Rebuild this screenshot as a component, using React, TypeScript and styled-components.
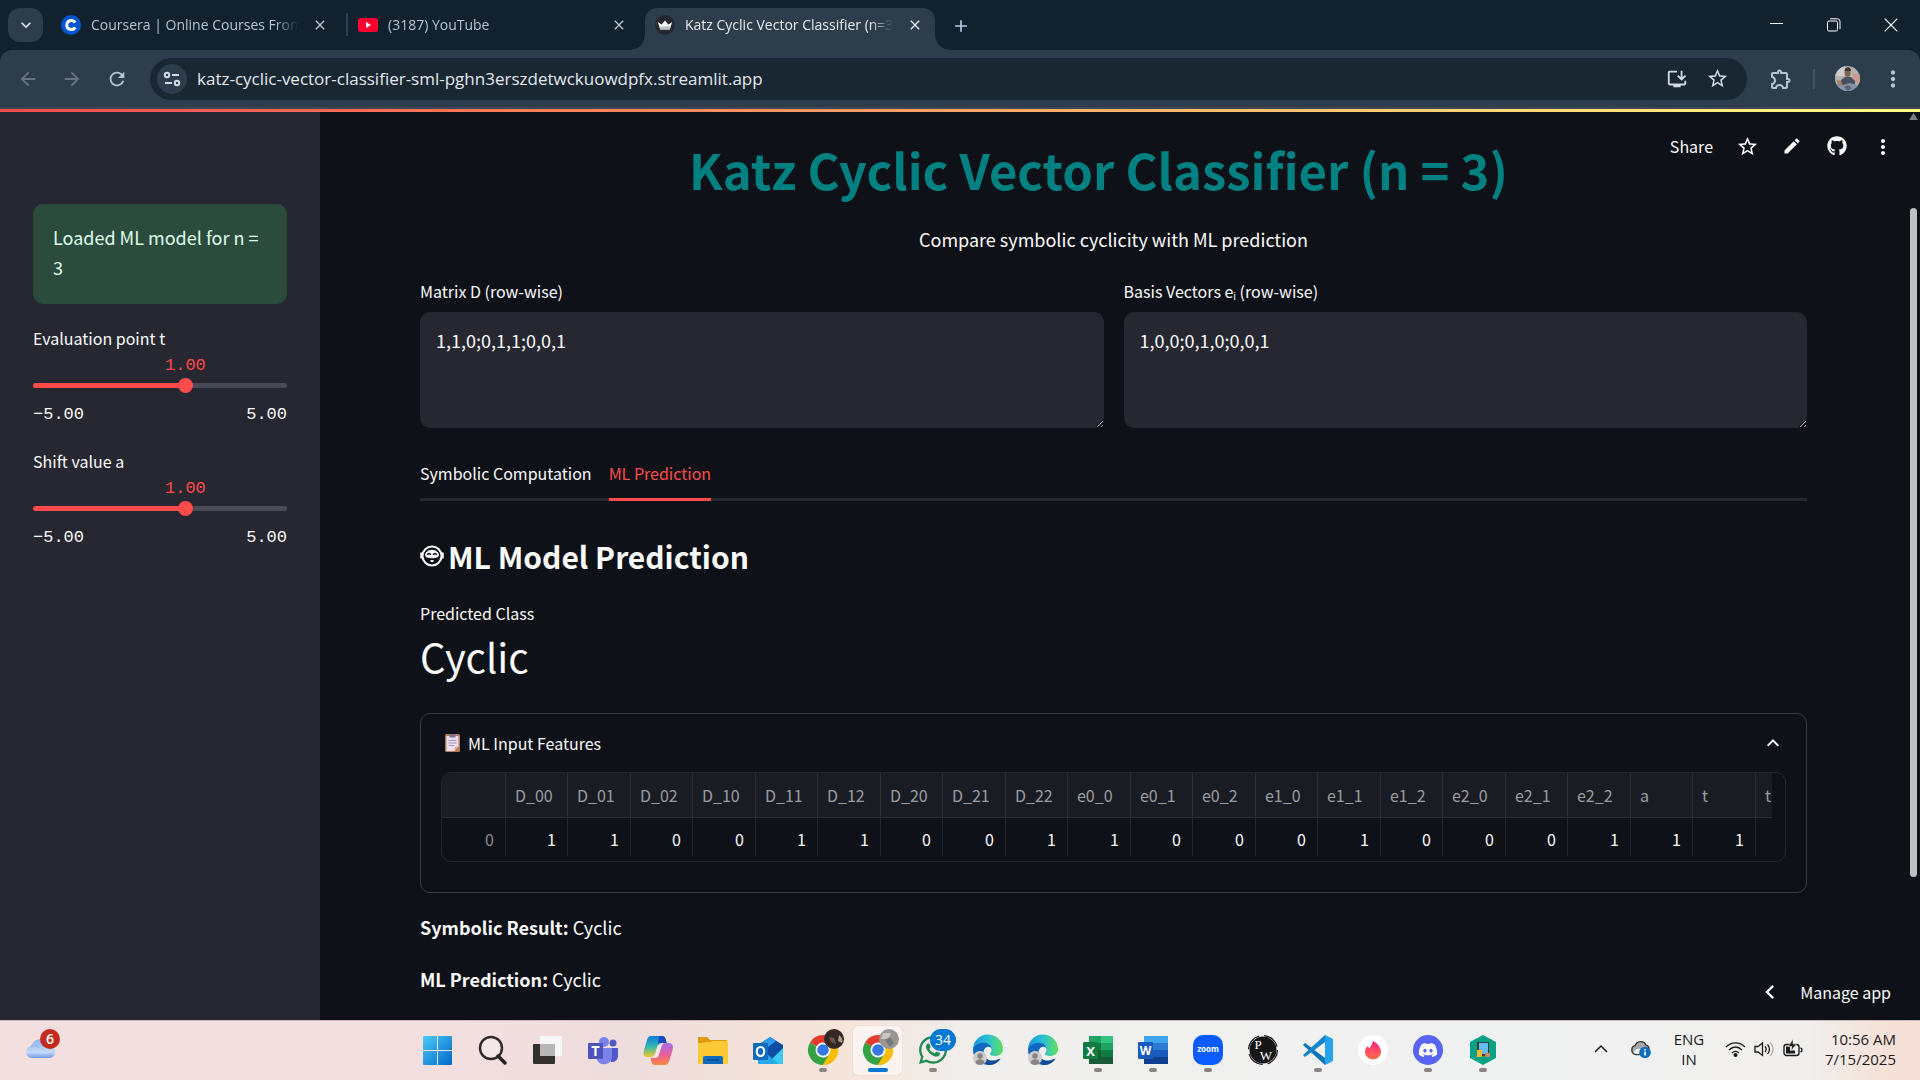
import React, { useState } from 'react';
import styled, { createGlobalStyle, css } from 'styled-components';
import {
  MdOutlineInstallDesktop,
  MdStarBorder,
  MdOutlineExtension,
  MdMoreVert,
  MdEdit,
  MdArrowBack,
  MdArrowForward,
  MdRefresh,
  MdClose,
  MdAdd,
  MdKeyboardArrowDown,
  MdKeyboardArrowUp,
  MdKeyboardArrowLeft,
} from 'react-icons/md';
import { FaGithub, FaDiscord, FaWhatsapp } from 'react-icons/fa';

const appFont = `'Noto Sans CJK SC', 'Noto Sans', sans-serif`;
const systemFont = `'Open Sans', 'Noto Sans', sans-serif`;
const monoFont = `'Liberation Mono', monospace`;

const GlobalStyle = createGlobalStyle`
  *, *::before, *::after { box-sizing: border-box; }
  body { margin: 0; background: #0e1117; }
  button, textarea, input { font: inherit; color: inherit; }
  button { background: none; border: 0; padding: 0; cursor: pointer; }
  svg { display: block; flex: none; }
`;

const Screen = styled.div`
  display: flex;
  flex-direction: column;
  height: 100vh;
  overflow: hidden;
  color: #fafafa;
  font-family: ${appFont};
`;

/* ---------- browser chrome ---------- */

const TabStrip = styled.header`
  display: flex;
  align-items: flex-end;
  height: 50px;
  padding-left: 8px;
  background: #12212e;
  font-family: ${systemFont};
  font-size: 14px;
`;

const TabSearch = styled.button`
  display: grid;
  place-items: center;
  width: 35px;
  height: 34px;
  margin: 0 8px 8px 0;
  border-radius: 12px;
  background: #2e3d4b;
  color: #e3e8ee;
`;

const BrowserTab = styled.div<{ $active?: boolean; $divider?: boolean }>`
  position: relative;
  display: flex;
  align-items: center;
  gap: 10px;
  width: ${(p) => (p.$active ? 290 : 297)}px;
  height: 42px;
  padding: 0 ${(p) => (p.$active ? 10 : 16)}px 8px 10px;
  color: ${(p) => (p.$active ? '#e6ebf0' : '#b6c3d1')};
  ${(p) =>
    p.$divider &&
    css`
      border-right: 2px solid transparent;
      border-image: linear-gradient(transparent 14%, #2e3d4b 14%, #2e3d4b 66%, transparent 66%) 1;
    `}
  ${(p) =>
    p.$active &&
    css`
      border-radius: 12px 12px 0 0;
      background: #2e3d4b;
      &::before,
      &::after {
        content: '';
        position: absolute;
        bottom: 0;
        width: 14px;
        height: 14px;
      }
      &::before {
        left: -14px;
        background: radial-gradient(circle at 0 0, transparent 13px, #2e3d4b 14px);
      }
      &::after {
        right: -14px;
        background: radial-gradient(circle at 100% 0, transparent 13px, #2e3d4b 14px);
      }
    `}
`;

const TabTitle = styled.span`
  flex: 1;
  overflow: hidden;
  white-space: nowrap;
  line-height: 24px;
  mask-image: linear-gradient(to right, #000 88%, transparent 99%);
`;

const IconButton = styled.button<{ $w?: number; $h?: number }>`
  display: grid;
  place-items: center;
  width: ${(p) => p.$w ?? 20}px;
  height: ${(p) => p.$h ?? 20}px;
`;

const NewTab = styled(IconButton)`
  margin: 0 0 14px 16px;
  color: #b6c9de;
`;

const WindowControls = styled.div`
  display: flex;
  align-self: stretch;
  margin-left: auto;
  color: #fff;
`;

const AddressRow = styled.div`
  background: #12212e;
`;

const Toolbar = styled.div`
  display: flex;
  align-items: center;
  height: 59px;
  padding: 0 5px 0 6px;
  border-radius: 12px 12px 0 0;
  border-bottom: 2px solid #404753;
  background: #2e3d4b;
  color: #b6c3d1;
`;

const NavButton = styled(IconButton)<{ $dim?: boolean }>`
  color: ${(p) => (p.$dim ? '#697581' : '#b6c3d1')};
`;

const AddressBar = styled.div`
  display: flex;
  flex: 1;
  align-items: center;
  height: 42px;
  margin: 0 11px 0 10px;
  padding: 0 10px 0 7px;
  border-radius: 21px;
  background: #192733;
  color: #d3dae2;
`;

const SiteInfo = styled.button`
  display: grid;
  place-items: center;
  width: 30px;
  height: 30px;
  border-radius: 50%;
  background: #2e3d4b;
`;

const AddressInput = styled.input`
  flex: 1;
  min-width: 0;
  margin: 0 10px;
  padding: 0;
  border: 0;
  outline: 0;
  background: transparent;
  color: #e3e8ee;
  font-family: ${systemFont};
  font-size: 17px;
  line-height: 24px;
`;

const ToolbarDivider = styled.span`
  width: 2px;
  height: 20px;
  margin: 0 10px;
  background: #465563;
`;

/* ---------- page ---------- */

const Decoration = styled.div`
  flex: none;
  height: 3px;
  background: linear-gradient(90deg, #ff4b4b, #fffd80);
`;

const Page = styled.div`
  position: relative;
  display: grid;
  grid-template-columns: 320px 1fr 13px;
  flex: 1;
  min-height: 0;
  overflow: hidden;
  background: #0e1117;
`;

const Sidebar = styled.aside`
  padding: 92px 33px 0;
  background: #262730;
`;

const Alert = styled.div`
  margin-bottom: 21px;
  padding: 18px 20px 22px;
  border-radius: 10px;
  background: #2b4b3c;
  color: #dffde9;
  font-size: 18px;
  line-height: 30px;
`;

const SliderField = styled.div`
  display: flex;
  flex-direction: column;
  margin-bottom: 20px;
`;

const FieldLabel = styled.label`
  font-size: 16px;
  line-height: 26px;
`;

const ValueTrack = styled.div`
  display: flex;
  justify-content: flex-end;
  padding-top: 2px;
  color: #ff4b4b;
  font-family: ${monoFont};
  font-size: 17px;
  line-height: 25px;

  & > output {
    transform: translateX(50%);
  }
`;

const RangeTrack = styled.div`
  display: flex;
  height: 5px;
  margin: 5px 0;
  border-radius: 3px;
`;

const Range = styled.input`
  appearance: none;
  flex: 1;
  height: 15px;
  margin: -5px -7px;
  background: transparent;

  &::-webkit-slider-thumb {
    appearance: none;
    width: 15px;
    height: 15px;
    border-radius: 50%;
    background: #ff4b4b;
  }
`;

const RangeEnds = styled.div`
  display: flex;
  justify-content: space-between;
  padding-top: 8px;
  font-family: ${monoFont};
  font-size: 17px;
  line-height: 27px;
`;

const Main = styled.main`
  min-width: 0;
  padding: 24px 100px 0;
  overflow: hidden;
`;

const Title = styled.h1`
  margin: 0 30px 22px 0;
  color: #008080;
  font-size: 49px;
  font-weight: 700;
  line-height: 66px;
  text-align: center;
`;

const Subtitle = styled.p`
  margin: 0 0 24px;
  font-size: 18px;
  line-height: 30px;
  text-align: center;
`;

const Columns = styled.div`
  display: grid;
  grid-template-columns: 1fr 1fr;
  gap: 20px;
`;

const TextField = styled.div`
  display: flex;
  flex-direction: column;
  gap: 8px;
`;

const TextArea = styled.textarea`
  height: 116px;
  padding: 13px 16px;
  border: 0;
  border-radius: 10px;
  outline: 0;
  background: #262730;
  font-size: 18px;
  line-height: 30px;
  resize: vertical;
`;

const TabList = styled.div`
  display: flex;
  gap: 17px;
  margin: 20px 0 34px;
  box-shadow: inset 0 -3px #26282e;
`;

const TabButton = styled.button<{ $selected?: boolean }>`
  height: 53px;
  border-bottom: 3px solid ${(p) => (p.$selected ? '#ff4b4b' : 'transparent')};
  color: ${(p) => (p.$selected ? '#ff4b4b' : '#fafafa')};
  font-size: 16px;
`;

const Heading = styled.h2`
  display: flex;
  align-items: center;
  gap: 4px;
  margin: 0 0 23px;
  font-size: 30px;
  font-weight: 600;
  line-height: 42px;
`;

const MetricLabel = styled.div`
  font-size: 16px;
  line-height: 26px;
`;

const MetricValue = styled.div`
  margin-bottom: 27px;
  font-size: 40px;
  line-height: 60px;
`;

const Expander = styled.details`
  margin-bottom: 18px;
  padding: 0 20px 30px;
  border: 1px solid #3a3c42;
  border-radius: 10px;
`;

const ExpanderSummary = styled.summary`
  display: flex;
  align-items: center;
  gap: 8px;
  height: 58px;
  padding: 0 1px 0 4px;
  font-size: 16px;
  list-style: none;
  cursor: pointer;

  & > :last-child {
    margin-left: auto;
  }
`;

const TableFrame = styled.div`
  height: 90px;
  padding-right: 13px;
  border: 1px solid #23262c;
  border-radius: 10px;
  overflow: hidden;
`;

const TableViewport = styled.div`
  overflow: hidden;
`;

const DataTable = styled.table`
  width: 1376px;
  table-layout: fixed;
  border-collapse: separate;
  border-spacing: 0;
  font-size: 16px;
`;

const Col = styled.col<{ $w: number }>`
  width: ${(p) => p.$w}px;
`;

const HeadCell = styled.th`
  height: 45px;
  padding: 0 9px;
  border-right: 1px solid #2c2e36;
  border-bottom: 1px solid #2c2e36;
  background: #1a1c23;
  color: #9c9da1;
  font-weight: 400;
  text-align: left;
`;

const Cell = styled.td`
  height: 38px;
  padding: 3px 11px 0;
  border-right: 1px solid #25272e;
  text-align: right;
`;

const IndexCell = styled.th`
  height: 38px;
  padding: 3px 11px 0;
  border-right: 1px solid #25272e;
  color: #8b8c90;
  font-weight: 400;
  text-align: right;
`;

const Result = styled.p`
  margin: 0 0 20px;
  font-size: 18px;
  line-height: 32px;
`;

const AppActions = styled.nav`
  position: absolute;
  top: 22px;
  right: 31px;
  display: flex;
  align-items: center;
  gap: 23px;
  font-size: 16px;
  line-height: 24px;
`;

const ManageApp = styled.button`
  position: absolute;
  right: 29px;
  bottom: 14px;
  display: flex;
  align-items: center;
  gap: 16px;
  font-size: 16px;
  line-height: 26px;
`;

const ScrollRail = styled.div`
  display: flex;
  flex-direction: column;
  align-items: center;
  padding: 1px 0 0 0;
`;

const ScrollThumb = styled.div`
  width: 7px;
  height: 669px;
  margin-top: 88px;
  border-radius: 4px;
  background: #c0c0c2;
`;

/* ---------- taskbar ---------- */

const Taskbar = styled.footer`
  display: grid;
  grid-template-columns: 1fr auto 1fr;
  flex: none;
  height: 60px;
  border-top: 1px solid #c9bdbd;
  background: linear-gradient(90deg, #f4dfe0 0%, #f4dfe0 24%, #eedddd 33%, #f3e3da 40%, #f6e4da 44%, #f0efee 51%, #f0f1f1 80%, #f1efee 94%, #f5e2d8 98%, #f5e0d8 100%);
  color: #1b1b1b;
  font-family: ${systemFont};
  font-size: 15px;
  line-height: 20px;
`;

const Weather = styled.button`
  justify-self: start;
  align-self: start;
  padding: 7px 0 0 25px;
`;

const Apps = styled.div`
  display: flex;
`;

const AppButton = styled.button<{ $active?: boolean }>`
  display: flex;
  flex-direction: column;
  align-items: center;
  width: 49px;
  height: 49px;
  margin: 5px 3px;
  padding-top: 6px;
  border-radius: 5px;
  ${(p) =>
    p.$active &&
    css`
      background: #fbf3ef;
      box-shadow: 0 0 1px #c9b8b2;
    `}
`;

const Indicator = styled.span<{ $state?: 'open' | 'active' }>`
  width: ${(p) => (p.$state === 'active' ? 20 : 8)}px;
  height: 4px;
  margin-top: 2px;
  border-radius: 2px;
  background: ${(p) => (p.$state === 'active' ? '#0078d4' : p.$state === 'open' ? '#8a8583' : 'transparent')};
`;

const Tray = styled.div`
  display: flex;
  align-items: center;
  justify-content: flex-end;
  padding: 0 24px 3px 0;
`;

const Language = styled.div`
  width: 72px;
  text-align: center;
`;

const TrayIcons = styled.button`
  display: flex;
  align-items: center;
  width: 80px;
  gap: 8px;
`;

const Clock = styled.time`
  width: 91px;
  text-align: right;
`;

/* ---------- drawings ---------- */

const CourseraIcon = () => (
  <svg width="20" height="20" viewBox="0 0 20 20">
    <circle cx="10" cy="10" r="10" fill="#0056d2" />
    <path d="M14.2 12.4A4.6 4.6 0 1 1 14.2 7.6" fill="none" stroke="#fff" strokeWidth="3" />
  </svg>
);

const YouTubeIcon = () => (
  <svg width="20" height="20" viewBox="0 0 20 20">
    <rect y="3" width="20" height="14" rx="3" fill="#ff0033" />
    <path d="M8 7l5 3-5 3z" fill="#fff" />
  </svg>
);

const CrownIcon = () => (
  <svg width="20" height="20" viewBox="0 0 20 20">
    <circle cx="10" cy="10" r="10" fill="#262730" />
    <path d="M2.800 7l3.800 2.400L10 5.600l3.400 3.800L17.200 7l-2.400 7.400H5.200z" fill="#f4f4f5" />
    <path d="M4.400 11.500h11.200l-.8 2.900H5.200z" fill="#bfc0c4" />
  </svg>
);

const SiteSettingsIcon = () => (
  <svg width="18" height="18" viewBox="0 0 18 18" fill="none" stroke="#d3dae2" strokeWidth="2">
    <circle cx="4" cy="5" r="2.200" />
    <path d="M9 5h7M2 13h7" />
    <circle cx="14" cy="13" r="2.200" />
  </svg>
);

const MinimizeIcon = () => (
  <svg width="14" height="14" viewBox="0 0 14 14">
    <path d="M0 5.500h13" stroke="currentColor" />
  </svg>
);

const RestoreIcon = () => (
  <svg width="14" height="14" viewBox="0 0 14 14" fill="none" stroke="currentColor">
    <rect x=".5" y="3" width="10" height="10" rx="1.500" />
    <path d="M3 .800h7.500a2.500 2.500 0 0 1 2.500 2.500V11" />
  </svg>
);

const CloseWindowIcon = () => (
  <svg width="14" height="14" viewBox="0 0 14 14">
    <path d="M.7.700l12.600 12.600M13.300.700L.7 13.300" stroke="currentColor" strokeWidth="1.200" />
  </svg>
);

const ProfilePhoto = () => (
  <svg width="25" height="25" viewBox="0 0 25 25">
    <clipPath id="photo"><circle cx="12.500" cy="12.500" r="12.500" /></clipPath>
    <g clipPath="url(#photo)">
      <rect width="25" height="25" fill="#b5b1ac" />
      <path d="M0 0h10v10H0z" fill="#d0cdc8" />
      <path d="M18 8h7v9h-7z" fill="#c79a94" />
      <ellipse cx="12.500" cy="7" rx="3" ry="4" fill="#7d6555" />
      <path d="M9.500 5c0-5 7-5 6.500 0z" fill="#3c3532" />
      <path d="M6 14l4-3h6l4 4v4H6z" fill="#4a4f60" />
      <path d="M2 17l7 2 5-2 9 2v6H2z" fill="#8494ab" />
      <path d="M9 21l4-2 4 3-4 3z" fill="#5a6478" />
      <path d="M2 14l4 1 2 5-5-1z" fill="#a77d67" />
    </g>
  </svg>
);

const FaceIcon = () => (
  <svg width="24" height="24" viewBox="0 0 24 24" fill="none" stroke="#fafafa">
    <path d="M1.500 8.500v6M22.500 8.500v6" strokeWidth="2.500" />
    <circle cx="12" cy="12" r="9.500" strokeWidth="2" />
    <path d="M5.500 11.500c0-7 13-7 13 0 0 3-13 3-13 0z" fill="#fafafa" />
    <path d="M7.500 11c.5-2 2.700-2 3.200 0M13.300 11c.5-2 2.700-2 3.200 0" stroke="#0e1117" strokeWidth="1.500" />
    <path d="M10.500 17h3" strokeWidth="2" />
  </svg>
);

const ClipboardIcon = () => (
  <svg width="15" height="18" viewBox="0 0 15 18">
    <rect width="15" height="18" rx="1.500" fill="#b9795a" />
    <path d="M1.500 2h12v10.500L9.500 17h-8z" fill="#e9dff0" />
    <path d="M9.500 17l.5-4 3.500-.5z" fill="#f0a25c" />
    <path d="M4.500 0h6v3.500h-6z" fill="#7b7385" />
    <path d="M3.500 6.500h8M3.500 9h8M3.500 11.500h6" stroke="#a397b3" />
  </svg>
);

const WeatherIcon = () => (
  <svg width="36" height="34" viewBox="0 0 36 34">
    <defs>
      <linearGradient id="cloud" x1="0" y1="0" x2="0" y2="1">
        <stop offset="0" stopColor="#8fb2ee" />
        <stop offset=".7" stopColor="#c5dbf6" />
        <stop offset="1" stopColor="#6f9ae8" />
      </linearGradient>
    </defs>
    <path d="M7 30a6 6 0 0 1-1-11.900C8 12 15 9 20 13c2 1 3 3 3.500 5A6 6 0 0 1 25 30z" fill="url(#cloud)" />
    <path d="M6 18.500c3-2 7-.5 8 1" fill="none" stroke="#86aaea" />
    <circle cx="25" cy="11" r="10" fill="#c42b1c" />
    <text x="25" y="16" fill="#fff" fontFamily="Open Sans" fontSize="14" fontWeight="600" textAnchor="middle">6</text>
  </svg>
);

const Icon = ({ children }: { children: React.ReactNode }) => (
  <svg width="30" height="34" viewBox="0 0 30 34" overflow="visible">{children}</svg>
);

const WindowsIcon = () => (
  <Icon>
    <defs>
      <linearGradient id="win" x1="0" y1="0" x2="1" y2="1">
        <stop offset="0" stopColor="#4ecbf7" />
        <stop offset="1" stopColor="#0067c8" />
      </linearGradient>
    </defs>
    <path d="M0 5a1 1 0 0 1 1-1h13v14H0zM15 4h13a1 1 0 0 1 1 1v13H15zM0 19h14v14H1a1 1 0 0 1-1-1zM15 19h14v13a1 1 0 0 1-1 1H15z" fill="url(#win)" />
  </Icon>
);

const SearchIcon = () => (
  <Icon>
    <circle cx="13" cy="16" r="11" fill="#fff" fillOpacity=".25" stroke="#2f2c2b" strokeWidth="2.500" />
    <path d="M20 24l7 7" stroke="#262322" strokeWidth="3.500" strokeLinecap="round" />
  </Icon>
);

const TaskViewIcon = () => (
  <Icon>
    <rect y="12" width="22" height="20" rx="1" fill="#33312f" />
    <rect x="7" y="4" width="22" height="20" rx="1" fill="#f7f7f7" />
    <path d="M7 12h15v12H7z" fill="#b9b7b6" />
  </Icon>
);

const TeamsIcon = () => (
  <Icon>
    <circle cx="25" cy="11" r="3.500" fill="#5059c9" />
    <path d="M20 16h10v8a6 6 0 0 1-7 6z" fill="#5059c9" />
    <circle cx="16" cy="10" r="5" fill="#7b83eb" />
    <path d="M9 16h15v9a8 8 0 0 1-15 3z" fill="#7b83eb" />
    <rect x="0" y="11" width="15" height="16" rx="1" fill="#4b53bc" />
    <path d="M3.500 15h8M7.500 15v9" stroke="#fff" strokeWidth="2.200" />
  </Icon>
);

const CopilotIcon = () => (
  <Icon>
    <defs>
      <linearGradient id="copA" x1="0" y1="0" x2="0" y2="1">
        <stop offset="0" stopColor="#0f7be0" />
        <stop offset=".5" stopColor="#32b8b0" />
        <stop offset="1" stopColor="#f5c92e" />
      </linearGradient>
      <linearGradient id="copB" x1="0" y1="0" x2="0" y2="1">
        <stop offset="0" stopColor="#a66cf0" />
        <stop offset=".6" stopColor="#f25f8c" />
        <stop offset="1" stopColor="#f98b3a" />
      </linearGradient>
    </defs>
    <path d="M8 4h11c2 0 3 1 3.500 3l1.200 4H19c-3 0-4 1-5 4l-2 7c-.6 2-2 3-4 3H4c-4 0-4-4-3-7l3-10c1-3 2-4 4-4z" fill="url(#copA)" />
    <path d="M16 4h3c2 0 3 1 3.500 3l1.200 4H19c-2 0-3 .5-4 2z" fill="#1c49c2" />
    <path d="M22 33H12c-2 0-3-1-3.500-3l-1-4H11c3 0 4-1 5-4l2-7c.6-2 2-4 5-4h3c4 0 4.500 4 3.500 7l-3 10c-1 3-2.500 5-4.500 5z" fill="url(#copB)" />
    <path d="M15 14l4-1-4 12-4 1z" fill="#f4e6e4" />
  </Icon>
);

const FolderIcon = () => (
  <Icon>
    <path d="M0 5h9l3 3h17v5H0z" fill="#dc9b0a" />
    <path d="M0 11l12-1 2-1h15a1 1 0 0 1 1 1v21a1 1 0 0 1-1 1H0z" fill="#fdc935" />
    <path d="M5 32v-6a2 2 0 0 1 2-2h16a2 2 0 0 1 2 2v6z" fill="#0f6cbd" />
    <path d="M9 28h12" stroke="#0a4a86" strokeWidth="1.500" />
  </Icon>
);

const OutlookIcon = () => (
  <Icon>
    <path d="M5 13L17 5l13 8v17a2 2 0 0 1-2 2H7a2 2 0 0 1-2-2z" fill="#0a4ea3" />
    <path d="M7 12l10-7 6 4-12 9z" fill="#2d9ced" />
    <path d="M30 16v14a2 2 0 0 1-2 2H14z" fill="#3ccbf4" />
    <path d="M14 22l12 10H7a2 2 0 0 1-2-2v-3z" fill="#28a8ea" />
    <rect y="11" width="15" height="17" rx="1" fill="#0f6cbd" />
    <ellipse cx="7.500" cy="19.500" rx="3.700" ry="4.500" fill="none" stroke="#fff" strokeWidth="2.200" />
  </Icon>
);

const ChromeIcon = ({ light }: { light?: boolean }) => (
  <Icon>
    <path d="M15 18L2 10.500A15 15 0 0 1 28 10.500z" fill="#e33b2e" />
    <path d="M15 18h15a15 15 0 0 1-15 15z" fill="#fbbc04" />
    <path d="M15 18l13-7.500A15 15 0 0 1 15 33z" fill="#fbbc04" />
    <path d="M15 18v15A15 15 0 0 1 2 10.500z" fill="#34a144" />
    <path d="M15 33l7-12-7-3-4 4z" fill="#34a144" />
    <path d="M15 33l7.500-13 5.500-9.500A15 15 0 0 1 15 33z" fill="#fbbc04" />
    <circle cx="15" cy="18" r="7.500" fill="#fff" />
    <circle cx="15" cy="18" r="5.800" fill="#3478e5" />
    <circle cx="26" cy="7" r="10" fill={light ? '#9b9795' : '#352824'} />
    {light ? (
      <>
        <path d="M20 1h8l-2 6h-8z" fill="#c8c5c2" />
        <path d="M22 8l5-3 4 6-4 4z" fill="#77777f" />
        <path d="M30 2l5 4-2 6z" fill="#a98f89" />
      </>
    ) : (
      <>
        <path d="M31 3c3 2 4 5 3 8l-4-2z" fill="#b39d7c" />
        <path d="M21 5l5 1 2 6-5-2z" fill="#655752" />
      </>
    )}
  </Icon>
);

const WhatsAppIcon = () => (
  <Icon>
    <FaWhatsapp x={-1} y={2} size={32} color="#1f8a52" />
    <rect x="12" y="-3" width="26" height="22" rx="11" fill="#0078d4" />
    <text x="25" y="13" fill="#fff" fontFamily="Open Sans" fontSize="14" textAnchor="middle">34</text>
  </Icon>
);

const EdgeIcon = () => (
  <Icon>
    <defs>
      <linearGradient id="edgeTop" x1="0" y1="0" x2="1" y2="0">
        <stop offset="0" stopColor="#1a95e0" />
        <stop offset=".5" stopColor="#2cc0d4" />
        <stop offset="1" stopColor="#5fe05a" />
      </linearGradient>
    </defs>
    <path d="M0 18A15 15 0 0 1 30 17c0 5-4 7-8 7-3 0-5-1-5-2 0-1 1.500-2 1.500-4 0-3-3-5-6.500-5C6 13 1 15 0 18z" fill="url(#edgeTop)" />
    <path d="M0 18c1-5 7-8 13-7 3 .5 5 3 5.500 5-4-3-8 0-8 5 0 6 6 9 11 8 3-.5 5-1.500 6-2C24 32 19 33 15 33A15 15 0 0 1 0 18z" fill="#1068c0" />
    <path d="M10.500 20c0 6 5 9 10 8.500 3-.3 5-1.500 7-2C24 32 19 33 15 33c-5-2-6-8-4.500-13z" fill="#124d9b" />
    <circle cx="7" cy="26" r="7" fill="#cfcdcb" />
    <circle cx="7" cy="24" r="2.800" fill="#8a8583" />
    <path d="M2.500 31c0-5 9-5 9 0-2 2.500-7 2.500-9 0z" fill="#8a8583" />
  </Icon>
);

const WordIcon = () => (
  <Icon>
    {['#41a5ee', '#2b7cd3', '#185abd', '#103f91'].map((tone, i) => (
      <path key={tone} d={`M6 ${4 + i * 7}h24v7H6z`} fill={tone} />
    ))}
    <rect y="10" width="15" height="17" rx="1" fill="#185abd" />
    <text x="7.500" y="23" fill="#fff" fontFamily="Open Sans" fontSize="12" fontWeight="700" textAnchor="middle">W</text>
  </Icon>
);

const ExcelIcon = () => (
  <Icon>
    <path d="M6 4h12v28H6z" fill="#21a366" />
    <path d="M18 4h12v7H18z" fill="#33c481" />
    <path d="M18 11h12v7H18z" fill="#21a366" />
    <path d="M6 11h12v7H6z" fill="#107c41" />
    <path d="M18 18h12v7H18z" fill="#107c41" />
    <path d="M6 18h12v14H6zM18 25h12v7H18z" fill="#185c37" />
    <rect y="10" width="15" height="17" rx="1" fill="#107c41" />
    <text x="7.500" y="23.500" fill="#fff" fontFamily="Open Sans" fontSize="13" fontWeight="700" textAnchor="middle">X</text>
  </Icon>
);

const ZoomIcon = () => (
  <Icon>
    <rect y="3" width="30" height="30" rx="10" fill="#0b5cff" />
    <text x="15" y="20" fill="#fff" fontFamily="Open Sans" fontSize="8" fontWeight="700" textAnchor="middle">zoom</text>
  </Icon>
);

const PwIcon = () => (
  <Icon>
    <circle cx="15" cy="18" r="13.500" fill="#161616" />
    <circle cx="15" cy="18" r="14.500" fill="none" stroke="#161616" strokeWidth="1.200" strokeDasharray="18 5" />
    <text x="10" y="17" fill="#fff" fontFamily="Liberation Serif" fontSize="13" textAnchor="middle">P</text>
    <text x="18" y="28" fill="#fff" fontFamily="Liberation Serif" fontSize="13" textAnchor="middle">W</text>
  </Icon>
);

const VsCodeIcon = () => (
  <Icon>
    <path d="M0 13l2-2 20 15v7z" fill="#0a73ba" />
    <path d="M0 23l2 2L22 10V3z" fill="#1284cc" />
    <path d="M22 3l8 4v22l-8 4z" fill="#24a3ee" />
  </Icon>
);

const TinderIcon = () => (
  <Icon>
    <defs>
      <linearGradient id="flame" x1="0" y1="0" x2="0" y2="1">
        <stop offset="0" stopColor="#fd267a" />
        <stop offset="1" stopColor="#ff6f4b" />
      </linearGradient>
    </defs>
    <circle cx="15" cy="18" r="15" fill="#fff" />
    <path d="M15 9c4 2 8 6 8 11a8 7.500 0 0 1-16 0c0-3 1.500-5 3-6 .3 1 .8 2 1.800 2.300C12.500 14 14.500 12 15 9z" fill="url(#flame)" />
  </Icon>
);

const DiscordIcon = () => (
  <Icon>
    <circle cx="15" cy="18" r="15" fill="#5865f2" />
    <FaDiscord x={5} y={8} size={20} color="#fff" />
  </Icon>
);

const HexIcon = () => (
  <Icon>
    <path d="M15 3l13 7v16l-13 7-13-7V10z" fill="#0aa184" />
    <rect x="9" y="10" width="12" height="14" fill="#3c3b3b" />
    <rect x="11" y="11" width="9" height="11" fill="#64bdf0" />
    <rect x="9" y="18" width="5" height="7" fill="#f7b733" />
    <rect x="17" y="21" width="5" height="4" fill="#c98c5a" />
  </Icon>
);

const TrayChevron = () => (
  <svg width="14" height="14" viewBox="0 0 14 14">
    <path d="M1 10l6-6 6 6" fill="none" stroke="#1b1b1b" strokeWidth="1.500" />
  </svg>
);

const OneDriveIcon = () => (
  <svg width="22" height="20" viewBox="0 0 22 20">
    <path d="M6 15.500a4.500 4.500 0 0 1-1-8.800C7 1.500 14 1 16 6.200c2 .3 3 1.800 3 3.800L9 15.500z" fill="#a9a7a6" stroke="#333" strokeWidth="1.300" />
    <path d="M4 14c0-4 4-5 7-4l3 5H6z" fill="#f0f0f0" />
    <circle cx="15" cy="13.500" r="5.800" fill="#0f6cbd" />
    <path d="M15 12.500v4M15 10v1.400" stroke="#fff" strokeWidth="1.600" />
  </svg>
);

const WifiIcon = () => (
  <svg width="21" height="20" viewBox="0 0 21 20" fill="none" stroke="#1b1b1b" strokeWidth="1.400">
    <path d="M1 8c5.500-5.500 13.500-5.500 19 0M4 11c4-4 9-4 13 0M7 14c2.500-2.300 4.500-2.300 7 0" />
    <circle cx="10.500" cy="16" r="1.300" fill="#1b1b1b" />
  </svg>
);

const SpeakerIcon = () => (
  <svg width="21" height="20" viewBox="0 0 21 20" fill="none" stroke="#1b1b1b" strokeWidth="1.300">
    <path d="M1 7.500h3L8.500 4v12.500L4 13H1z" />
    <path d="M11 7.500c1.300 1.500 1.300 4 0 5.500M13.500 5.500c2.600 2.500 2.600 7 0 9.500" />
    <path d="M16 3.500c4 3.500 4 10 0 13.500" stroke="#b5b3b2" />
  </svg>
);

const BatteryIcon = () => (
  <svg width="20" height="20" viewBox="0 0 20 20">
    <rect x="1" y="5.500" width="15" height="11" rx="2.500" fill="none" stroke="#1b1b1b" strokeWidth="1.400" />
    <path d="M17.500 9c2 .5 2 3.500 0 4" fill="none" stroke="#1b1b1b" strokeWidth="1.400" />
    <path d="M3 7.500h4v4h5v3H3z" fill="#1b1b1b" />
    <path d="M10 0L5.500 7.500H9L8 12l5.500-7H10z" fill="#1b1b1b" stroke="#f1f0ef" strokeWidth=".5" />
  </svg>
);

/* ---------- content ---------- */

const features: [string, string][] = [
  ['D_00', '1'], ['D_01', '1'], ['D_02', '0'], ['D_10', '0'], ['D_11', '1'], ['D_12', '1'],
  ['D_20', '0'], ['D_21', '0'], ['D_22', '1'], ['e0_0', '1'], ['e0_1', '0'], ['e0_2', '0'],
  ['e1_0', '0'], ['e1_1', '1'], ['e1_2', '0'], ['e2_0', '0'], ['e2_1', '0'], ['e2_2', '1'],
  ['a', '1'], ['t', '1'], ['tr', ''],
];

type TaskApp = { name: string; icon: React.ReactNode; state?: 'open' | 'active' };

const apps: TaskApp[] = [
  { name: 'Start', icon: <WindowsIcon /> },
  { name: 'Search', icon: <SearchIcon /> },
  { name: 'Task view', icon: <TaskViewIcon /> },
  { name: 'Teams', icon: <TeamsIcon /> },
  { name: 'Copilot', icon: <CopilotIcon /> },
  { name: 'File Explorer', icon: <FolderIcon /> },
  { name: 'Outlook', icon: <OutlookIcon /> },
  { name: 'Chrome', icon: <ChromeIcon />, state: 'open' },
  { name: 'Chrome, second profile', icon: <ChromeIcon light />, state: 'active' },
  { name: 'WhatsApp', icon: <WhatsAppIcon />, state: 'open' },
  { name: 'Edge', icon: <EdgeIcon /> },
  { name: 'Edge, second profile', icon: <EdgeIcon /> },
  { name: 'Excel', icon: <ExcelIcon />, state: 'open' },
  { name: 'Word', icon: <WordIcon />, state: 'open' },
  { name: 'Zoom', icon: <ZoomIcon />, state: 'open' },
  { name: 'Physics Wallah', icon: <PwIcon /> },
  { name: 'Visual Studio Code', icon: <VsCodeIcon />, state: 'open' },
  { name: 'Tinder', icon: <TinderIcon /> },
  { name: 'Discord', icon: <DiscordIcon />, state: 'open' },
  { name: 'Device manager', icon: <HexIcon />, state: 'open' },
];

const Slider = ({ id, label }: { id: string; label: string }) => {
  const [value, setValue] = useState(1);
  const percent = ((value + 5) / 10) * 100;
  return (
    <SliderField>
      <FieldLabel htmlFor={id}>{label}</FieldLabel>
      <ValueTrack style={{ width: `${percent}%` }}>
        <output htmlFor={id}>{value.toFixed(2)}</output>
      </ValueTrack>
      <RangeTrack style={{ background: `linear-gradient(90deg, #ff4b4b ${percent}%, #484a55 ${percent}%)` }}>
        <Range
          id={id}
          type="range"
          min={-5}
          max={5}
          step={0.01}
          value={value}
          onChange={(e) => setValue(Number(e.target.value))}
        />
      </RangeTrack>
      <RangeEnds>
        <span>−5.00</span>
        <span>5.00</span>
      </RangeEnds>
    </SliderField>
  );
};

const Browser = () => (
  <>
    <TabStrip>
      <TabSearch aria-label="Search tabs"><MdKeyboardArrowDown size={20} /></TabSearch>
      <BrowserTab $divider>
        <CourseraIcon />
        <TabTitle>Coursera | Online Courses From Top</TabTitle>
        <IconButton aria-label="Close tab"><MdClose size={16} /></IconButton>
      </BrowserTab>
      <BrowserTab>
        <YouTubeIcon />
        <TabTitle>(3187) YouTube</TabTitle>
        <IconButton aria-label="Close tab"><MdClose size={16} /></IconButton>
      </BrowserTab>
      <BrowserTab $active>
        <CrownIcon />
        <TabTitle>Katz Cyclic Vector Classifier (n=3)</TabTitle>
        <IconButton aria-label="Close tab"><MdClose size={16} /></IconButton>
      </BrowserTab>
      <NewTab aria-label="New tab"><MdAdd size={20} /></NewTab>
      <WindowControls>
        <IconButton $w={56} $h={50} aria-label="Minimize"><MinimizeIcon /></IconButton>
        <IconButton $w={57} $h={50} aria-label="Restore"><RestoreIcon /></IconButton>
        <IconButton $w={58} $h={50} aria-label="Close window"><CloseWindowIcon /></IconButton>
      </WindowControls>
    </TabStrip>
    <AddressRow>
      <Toolbar>
        <NavButton $w={44} $h={40} $dim aria-label="Back"><MdArrowBack size={22} /></NavButton>
        <NavButton $w={44} $h={40} $dim aria-label="Forward"><MdArrowForward size={22} /></NavButton>
        <NavButton $w={46} $h={40} aria-label="Reload"><MdRefresh size={22} /></NavButton>
        <AddressBar>
          <SiteInfo aria-label="Site information"><SiteSettingsIcon /></SiteInfo>
          <AddressInput
            aria-label="Address"
            defaultValue="katz-cyclic-vector-classifier-sml-pghn3erszdetwckuowdpfx.streamlit.app"
          />
          <IconButton $w={40} $h={40} aria-label="Install app"><MdOutlineInstallDesktop size={22} /></IconButton>
          <IconButton $w={40} $h={40} aria-label="Bookmark"><MdStarBorder size={23} /></IconButton>
        </AddressBar>
        <IconButton $w={45} $h={40} aria-label="Extensions"><MdOutlineExtension size={24} /></IconButton>
        <ToolbarDivider />
        <IconButton $w={45} $h={40} aria-label="Profile"><ProfilePhoto /></IconButton>
        <IconButton $w={45} $h={40} aria-label="Menu"><MdMoreVert size={26} /></IconButton>
      </Toolbar>
    </AddressRow>
  </>
);

export default function App() {
  return (
    <Screen>
      <GlobalStyle />
      <Browser />
      <Decoration />
      <Page>
        <Sidebar>
          <Alert role="status">Loaded ML model for n = 3</Alert>
          <Slider id="evaluation-point" label="Evaluation point t" />
          <Slider id="shift-value" label="Shift value a" />
        </Sidebar>
        <Main>
          <Title>Katz Cyclic Vector Classifier (n = 3)</Title>
          <Subtitle>Compare symbolic cyclicity with ML prediction</Subtitle>
          <Columns>
            <TextField>
              <FieldLabel htmlFor="matrix">Matrix D (row-wise)</FieldLabel>
              <TextArea id="matrix" defaultValue="1,1,0;0,1,1;0,0,1" />
            </TextField>
            <TextField>
              <FieldLabel htmlFor="basis">Basis Vectors eᵢ (row-wise)</FieldLabel>
              <TextArea id="basis" defaultValue="1,0,0;0,1,0;0,0,1" />
            </TextField>
          </Columns>
          <TabList role="tablist">
            <TabButton role="tab" aria-selected="false">Symbolic Computation</TabButton>
            <TabButton role="tab" aria-selected="true" $selected>ML Prediction</TabButton>
          </TabList>
          <Heading><FaceIcon />ML Model Prediction</Heading>
          <MetricLabel>Predicted Class</MetricLabel>
          <MetricValue>Cyclic</MetricValue>
          <Expander open>
            <ExpanderSummary>
              <ClipboardIcon />
              <span>ML Input Features</span>
              <MdKeyboardArrowUp size={24} />
            </ExpanderSummary>
            <TableFrame>
              <TableViewport>
                <DataTable>
                  <colgroup>
                    <Col $w={64} />
                    {features.map(([name], i) => <Col key={name} $w={i % 2 ? 63 : 62} />)}
                  </colgroup>
                  <thead>
                    <tr>
                      <HeadCell />
                      {features.map(([name]) => <HeadCell key={name} scope="col">{name}</HeadCell>)}
                    </tr>
                  </thead>
                  <tbody>
                    <tr>
                      <IndexCell scope="row">0</IndexCell>
                      {features.map(([name, value]) => <Cell key={name}>{value}</Cell>)}
                    </tr>
                  </tbody>
                </DataTable>
              </TableViewport>
            </TableFrame>
          </Expander>
          <Result><strong>Symbolic Result:</strong> Cyclic</Result>
          <Result><strong>ML Prediction:</strong> Cyclic</Result>
        </Main>
        <ScrollRail aria-hidden="true">
          <svg width="9" height="7" viewBox="0 0 9 7"><path d="M4.500 0L9 7H0z" fill="#7b7c80" /></svg>
          <ScrollThumb />
        </ScrollRail>
        <AppActions>
          <button>Share</button>
          <IconButton $w={22} $h={22} aria-label="Favorite"><MdStarBorder size={23} /></IconButton>
          <IconButton $w={22} $h={22} aria-label="Edit"><MdEdit size={20} /></IconButton>
          <IconButton $w={22} $h={22} aria-label="View source"><FaGithub size={20} /></IconButton>
          <IconButton $w={18} $h={22} aria-label="More"><MdMoreVert size={24} /></IconButton>
        </AppActions>
        <ManageApp><MdKeyboardArrowLeft size={28} />Manage app</ManageApp>
      </Page>
      <Taskbar>
        <Weather aria-label="Weather"><WeatherIcon /></Weather>
        <Apps>
          {apps.map((app) => (
            <AppButton key={app.name} aria-label={app.name} $active={app.state === 'active'}>
              {app.icon}
              <Indicator $state={app.state} />
            </AppButton>
          ))}
        </Apps>
        <Tray>
          <IconButton $w={56} $h={30} aria-label="Hidden icons"><TrayChevron /></IconButton>
          <IconButton $w={24} $h={30} aria-label="OneDrive"><OneDriveIcon /></IconButton>
          <Language>ENG<br />IN</Language>
          <TrayIcons aria-label="Network, sound and battery"><WifiIcon /><SpeakerIcon /><BatteryIcon /></TrayIcons>
          <Clock>10:56 AM<br />7/15/2025</Clock>
        </Tray>
      </Taskbar>
    </Screen>
  );
}
